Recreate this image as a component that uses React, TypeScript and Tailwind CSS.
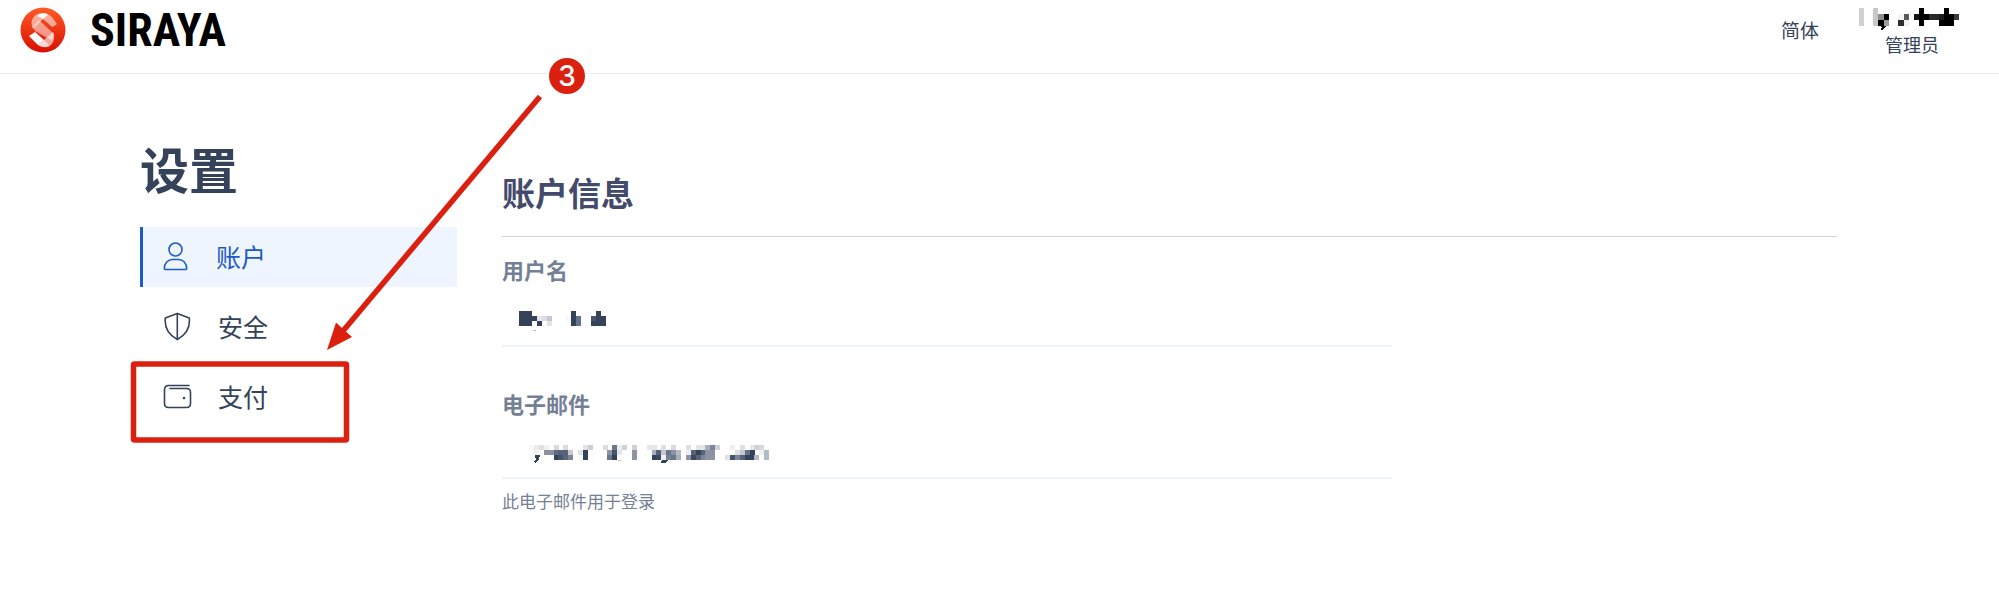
import type { ReactNode } from "react";

type Cell = [x: number, y: number, w: number, h: number, fill: string];

const INK = "#34425a";

const headerName: Cell[] = [
  [0, 0, 5, 18, "#d0d0d0"],
  [14, 0, 5, 18, "#c8c8c8"],
  [19, 6, 6, 6, "#8e8e8e"],
  [19, 12, 6, 6, "#000000"],
  [25, 6, 5, 6, "#000000"],
  [25, 12, 5, 6, "#9c9c9c"],
  [39, 6, 6, 6, "#f4f4f4"],
  [39, 12, 6, 6, "#2e2e2e"],
  [45, 6, 5, 6, "#5a5a5a"],
  [45, 12, 5, 6, "#f0f0f0"],
  [55, 6, 5, 6, "#161616"],
  [60, 0, 5, 18, "#000000"],
  [65, 6, 5, 6, "#000000"],
  [70, 6, 10, 6, "#2a2a2a"],
  [80, 6, 5, 6, "#1c1c1c"],
  [80, 12, 5, 6, "#000000"],
  [85, 0, 5, 18, "#000000"],
  [90, 6, 5, 12, "#000000"],
  [95, 6, 5, 6, "#3a3a3a"],
];

const userName: Cell[] = [
  [0, 0, 13, 15, INK],
  [13, 5, 5, 5, INK],
  [18, 10, 5, 5, INK],
  [18, 5, 5, 5, "#e6e6ea"],
  [23, 5, 5, 5, "#dcdce2"],
  [28, 5, 5, 5, "#c4c6d0"],
  [28, 10, 5, 5, "#e4e4e8"],
  [14, 19, 3, 1, "#b8bcc4"],
  [47, 5, 5, 5, "#f3f7f9"],
  [52, 0, 5, 15, INK],
  [57, 5, 5, 10, "#66718a"],
  [72, 5, 5, 5, "#48556b"],
  [72, 10, 5, 5, INK],
  [77, 0, 5, 15, INK],
  [82, 5, 5, 10, INK],
];

// One entry per 5px column: shades for the top, middle and bottom rows.
const emailShades: [number, string, string, string][] = [
  [0, "#f8f8f8", "", ""],
  [1, "#ebebed", "#f2f2f4", ""],
  [2, "#dfe0e4", "", ""],
  [3, "#f0f0f2", "#8b91a1", ""],
  [4, "", "#8b91a1", ""],
  [5, "#d6d8dd", "#616c80", INK],
  [6, "", "#56617a", "#46536a"],
  [7, "#d8dade", "#56617a", "#5a667a"],
  [8, "", "#c4c8d0", "#7c8698"],
  [10, "", "#e2e3e7", ""],
  [11, "#e2e3e7", INK, INK],
  [12, "#cbced5", "", ""],
  [15, "#dadce0", "", ""],
  [16, "", "#8c94a4", "#6c778b"],
  [17, "#6c778b", "#46536a", INK],
  [18, "#eceef0", "#e4e6ea", ""],
  [19, "#cfd1d7", "", ""],
  [21, "#cfd1d7", "#8c94a4", "#8c94a4"],
  [24, "#e8e8ec", "", ""],
  [25, "#e4e5e9", "#a8aeba", INK],
  [26, "", "#56617a", "#3c4960"],
  [27, "#dfe0e4", "#c4c8d0", "#eceef0"],
  [28, "", "#6c778b", "#76819a"],
  [29, "#d8dade", "#8c94a4", "#6c778b"],
  [30, "", "#b4b9c4", "#a8aeba"],
  [32, "#dfe0e4", "#eceef0", "#8c94a4"],
  [33, "", "#56617a", "#3c4960"],
  [34, "#e4e5e9", INK, "#5a667a"],
  [35, "#e4e5e9", "#56617a", "#7c8698"],
  [36, "#a8aeba", "#8c94a4", "#8c94a4"],
  [37, "#7c8698", "#8c94a4", "#8c94a4"],
  [38, "#cfd1d7", "", ""],
  [40, "", "", "#e0e1e5"],
  [41, "#f0f0f2", "", "#46536a"],
  [42, "", "#dfe0e4", "#7c8698"],
  [43, "#e0e1e5", "#c4c8d0", "#56617a"],
  [44, "", "#66718a", INK],
  [45, "#e8e8ec", INK, INK],
  [46, "#d0d4da", "", "#b4b9c4"],
  [47, "#d8dade", "#f0f0f2", ""],
  [48, "", "#b4b9c4", "#b4b9c4"],
];

const email: Cell[] = emailShades.flatMap(([col, ...rows]) =>
  rows
    .map((fill, row): Cell => [Math.round(col * 4.9), row * 5, 5, 5, fill])
    .filter((cell) => cell[4] !== ""),
);

function Mosaic({ cells, className, children }: { cells: Cell[]; className: string; children?: ReactNode }) {
  return (
    <svg className={className} shapeRendering="crispEdges" aria-hidden="true">
      {cells.map(([x, y, width, height, fill]) => (
        <rect key={`${x}-${y}`} x={x} y={y} width={width} height={height} fill={fill} />
      ))}
      {children}
    </svg>
  );
}

function LogoMark() {
  return (
    <svg className="size-[46px] shrink-0" viewBox="0 0 46 46" aria-hidden="true">
      <defs>
        <linearGradient id="mark" x1="0" y1="0" x2="0" y2="1">
          <stop offset="0" stopColor="#ff5a26" />
          <stop offset="1" stopColor="#d80f02" />
        </linearGradient>
      </defs>
      <circle cx="23" cy="23" r="22.500" fill="url(#mark)" />
      <path d="M13 11 Q16 6 22.500 6 Q28 6 32 10 L37 17 Q35 19 32 20 L23 12 L13 22 Q10 16 13 11Z" fill="#fff" fillOpacity=".55" />
      <path d="M17 9 Q22 4.500 28 7.500 L23 12Z" fill="#fff" />
      <path d="M13 20 L19 13 L34 27 Q34 31 31 33 L15 24 Z" fill="#fff" fillOpacity=".5" />
      <path d="M9 29 L15 25 L24 33 L18 38Z" fill="#fff" />
      <path d="M18 38 L24 33 L33 25 Q36 33 31 38 Q24 42 18 38Z" fill="#fff" fillOpacity=".6" />
      <path d="M24 33 L30 39 Q24 42 18 38Z" fill="#fff" fillOpacity=".6" />
    </svg>
  );
}

function Icon({ children }: { children: ReactNode }) {
  return (
    <svg
      className="size-[30px] shrink-0"
      viewBox="0 0 30 30"
      fill="none"
      stroke="currentColor"
      strokeWidth="1.6"
      strokeLinecap="round"
      strokeLinejoin="round"
      aria-hidden="true"
    >
      {children}
    </svg>
  );
}

const userIcon = (
  <Icon>
    <circle cx="14.500" cy="7.500" r="6.500" />
    <path d="M3.300 26.500 C3.300 21 7 17.500 11.500 17.500 H17.500 C22 17.500 25.700 21 25.700 26.500 Q25.700 27.500 24.700 27.500 H4.300 Q3.300 27.500 3.300 26.500Z" />
  </Icon>
);

const shieldIcon = (
  <Icon>
    <path d="M14.300 1.500 L26.300 6 Q27.800 20.500 14.300 27.500 Q0.800 20.500 2.300 6Z" />
    <path d="M14.300 1.500 V27.500" />
  </Icon>
);

const walletIcon = (
  <Icon>
    <path d="M26 3.500 H5.500 Q1.500 3.500 1.500 8 V21.500 Q1.500 25.500 5.500 25.500 H23.500 Q27.500 25.500 27.500 21.500 V10.500 Q27.500 6.500 23.500 6.500 H7" />
    <circle cx="21" cy="16" r="1.300" fill="currentColor" stroke="none" />
  </Icon>
);

const navItems = [
  { label: "账户", icon: userIcon, active: true },
  { label: "安全", icon: shieldIcon, active: false },
  { label: "支付", icon: walletIcon, active: false },
];

export default function App() {
  return (
    <div className="relative min-h-screen overflow-hidden bg-white font-['Noto_Sans_CJK_SC',sans-serif] text-[#34425a]">
      <header className="flex h-[74px] items-start justify-between border-b border-[#e8eef8] pr-10 pl-5">
        <a href="#home" className="flex items-center gap-6 pt-[6px]">
          <LogoMark />
          <span className="font-['Noto_Sans_ExtraCondensed','Roboto_Condensed','Liberation_Sans_Narrow',sans-serif] text-[46px] leading-[48px] font-bold text-black">
            SIRAYA
          </span>
        </a>
        <div className="flex items-start gap-10">
          <button type="button" className="mt-4 text-[19px] leading-7">
            简体
          </button>
          <div className="flex flex-col items-end pt-2">
            <Mosaic cells={headerName} className="h-[22px] w-[100px]">
              <path d="M21 18 H27 L26 20 L23 22 L21 21 L23 19Z" fill="#000" />
            </Mosaic>
            <p className="pr-5 text-[18px] leading-7">管理员</p>
          </div>
        </div>
      </header>

      <div className="flex gap-[45px] pr-[162px] pl-[140px]">
        <aside className="w-[317px] shrink-0 pt-[60px]">
          <h1 className="text-[49px] leading-[68px] font-bold">设置</h1>
          <nav className="mt-[25px] flex flex-col gap-[10px]">
            {navItems.map(({ label, icon, active }) => (
              <a
                key={label}
                href={`#${label}`}
                className={
                  active
                    ? "flex h-[60px] items-center gap-[25px] border-l-[3px] border-[#1c5ac6] bg-[#eef5ff] pl-[18px] text-[25px] text-[#1c5ac6]"
                    : "flex h-[60px] items-center gap-[25px] border-l-[3px] border-transparent pl-5 text-[25px]"
                }
              >
                {icon}
                {label}
              </a>
            ))}
          </nav>
        </aside>

        <main className="min-w-0 flex-1 pt-[94px]">
          <h2 className="border-b border-[#cfd4dc] pb-5 text-[33px] leading-[48px] font-bold text-[#434a6b]">
            账户信息
          </h2>
          <div className="w-2/3">
            <label htmlFor="username" className="mt-4 block text-[22px] leading-8 font-bold text-[#738096]">
              用户名
            </label>
            <div className="relative mt-2">
              <input id="username" readOnly className="block h-[54px] w-full border-b-2 border-[#edf2fa] outline-none" />
              <Mosaic cells={userName} className="pointer-events-none absolute top-[18px] left-[17px] h-5 w-[90px]" />
            </div>
            <label htmlFor="email" className="mt-10 block text-[22px] leading-8 font-bold text-[#738096]">
              电子邮件
            </label>
            <div className="relative mt-2">
              <input id="email" readOnly className="block h-[52px] w-full border-b-2 border-[#edf2fa] outline-none" />
              <Mosaic cells={email} className="pointer-events-none absolute top-[18px] left-[27px] h-5 w-[250px]">
                <path d="M6 10 H11 L10 14 L7 18 L4 17 L7 15Z" fill="#34425a" />
                <path d="M133 15 H139 L136 18 L132 18Z" fill="#34425a" />
                <path d="M88 15 H93 V16 H88Z" fill="#cfd1d7" />
              </Mosaic>
            </div>
            <p className="mt-2 text-[17px] leading-7 text-[#738096]">此电子邮件用于登录</p>
          </div>
        </main>
      </div>

      <svg className="pointer-events-none absolute top-0 left-0 h-[460px] w-[600px]" aria-hidden="true">
        <rect x="133.500" y="364" width="213" height="76" rx="1" fill="none" stroke="#dc200f" strokeWidth="5.500" strokeLinejoin="round" />
        <path d="M540 96.500 L343 331" stroke="#dc200f" strokeWidth="5.500" />
        <path d="M327 350 L336 322.500 L352 337Z" fill="#dc200f" />
      </svg>
      <span className="absolute top-[58px] left-[549px] flex size-9 items-center justify-center rounded-full bg-[#dc200f] font-['Inter','Liberation_Sans',sans-serif] text-[28px] leading-9 font-medium text-white">
        3
      </span>
    </div>
  );
}
